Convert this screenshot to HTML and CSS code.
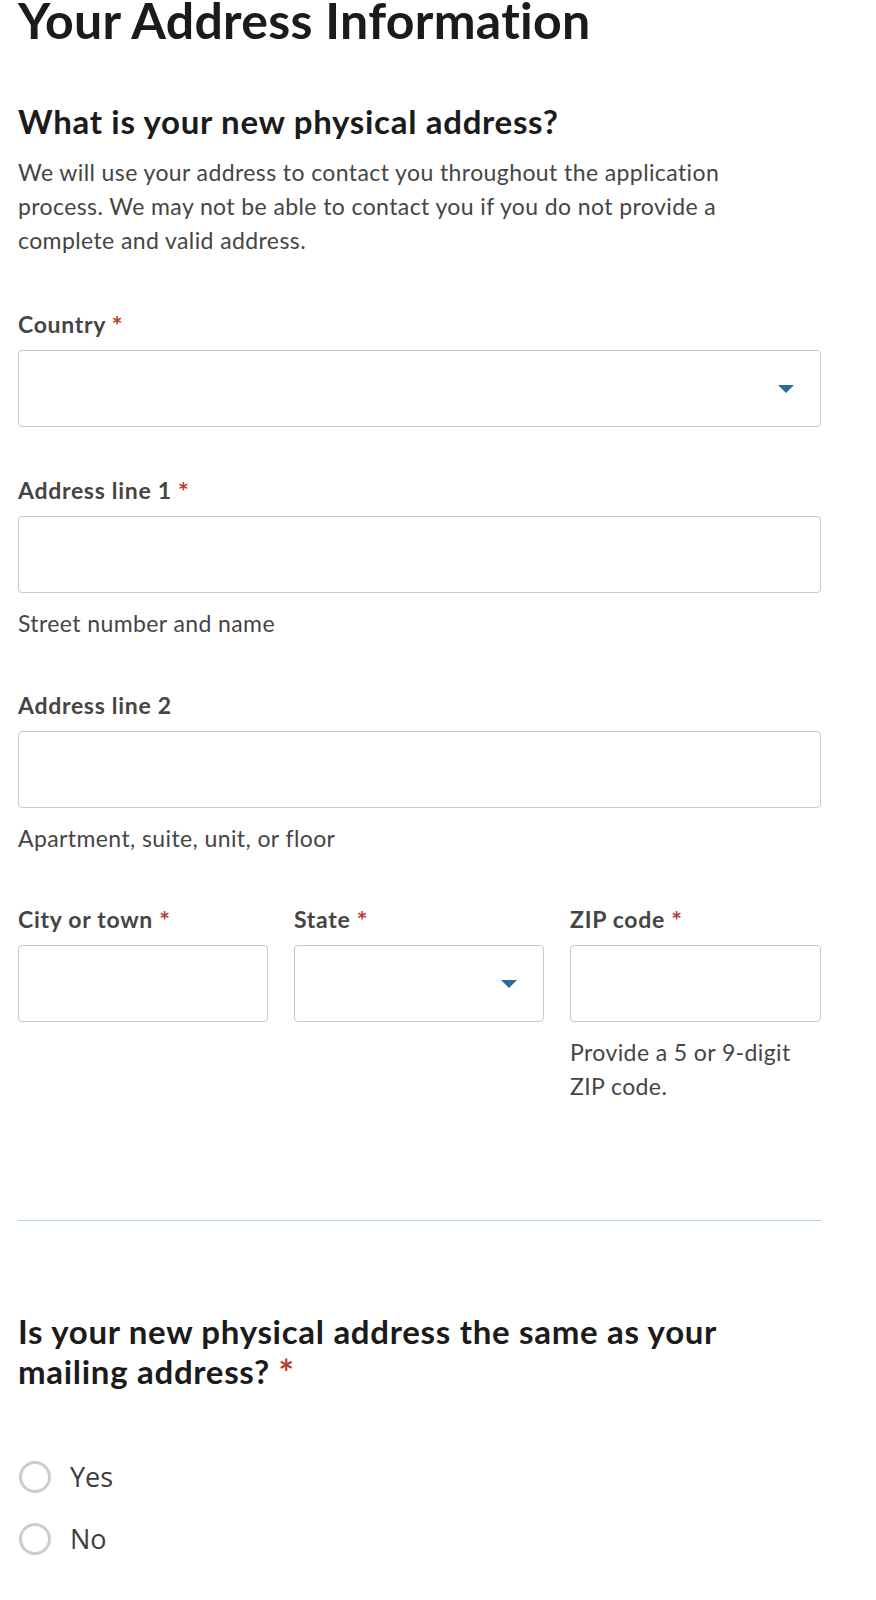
FILE: index.html
```html
<!DOCTYPE html>
<html lang="en">
<head>
<meta charset="utf-8">
<title>Your Address Information</title>
<link rel="stylesheet" href="styles.css">
</head>
<body>
<main class="page">
  <h1 class="page-title">Your Address Information</h1>

  <section class="section">
    <h2 class="section-title">What is your new physical address?</h2>
    <p class="intro">We will use your address to contact you throughout the application process. We may not be able to contact you if you do not provide a complete and valid address.</p>

    <div class="field field-first">
      <label class="field-label" for="country">Country <span class="req">*</span></label>
      <div class="select">
        <select id="country" class="control"></select>
        <span class="caret"></span>
      </div>
    </div>

    <div class="field">
      <label class="field-label" for="line1">Address line 1 <span class="req">*</span></label>
      <input id="line1" class="control" type="text">
      <div class="hint">Street number and name</div>
    </div>

    <div class="field field-after-hint">
      <label class="field-label" for="line2">Address line 2</label>
      <input id="line2" class="control" type="text">
      <div class="hint">Apartment, suite, unit, or floor</div>
    </div>

    <div class="field-row">
      <div class="field-col">
        <label class="field-label" for="city">City or town <span class="req">*</span></label>
        <input id="city" class="control" type="text">
      </div>
      <div class="field-col">
        <label class="field-label" for="state">State <span class="req">*</span></label>
        <div class="select">
          <select id="state" class="control"></select>
          <span class="caret"></span>
        </div>
      </div>
      <div class="field-col">
        <label class="field-label" for="zip">ZIP code <span class="req">*</span></label>
        <input id="zip" class="control" type="text">
        <div class="hint">Provide a 5 or 9-digit ZIP code.</div>
      </div>
    </div>
  </section>

  <hr class="divider">

  <fieldset class="question">
    <legend class="question-title">Is your new physical address the same as your mailing address? <span class="req">*</span></legend>
    <label class="radio">
      <input type="radio" name="same" value="yes">
      <span class="radio-mark"></span>
      <span class="radio-text">Yes</span>
    </label>
    <label class="radio">
      <input type="radio" name="same" value="no">
      <span class="radio-mark"></span>
      <span class="radio-text">No</span>
    </label>
  </fieldset>
</main>
</body>
</html>
```

FILE: styles.css
```css
* {
  box-sizing: border-box;
}

html, body {
  margin: 0;
  padding: 0;
  background: #ffffff;
}

body {
  font-family: "Lato", "Liberation Sans", sans-serif;
  color: #454545;
}

.page {
  width: 803px;
  margin-left: 18px;
}

.page-title {
  margin: 0;
  font-size: 50px;
  line-height: 40px;
  font-weight: 700;
  letter-spacing: 0.3px;
  color: #1b1b1b;
}

.section-title {
  margin: 61px 0 0;
  font-size: 33px;
  line-height: 40px;
  font-weight: 700;
  letter-spacing: 0.7px;
  color: #1b1b1b;
}

.intro {
  margin: 14px 0 0;
  max-width: 745px;
  font-size: 23px;
  line-height: 34px;
  letter-spacing: 0.4px;
  color: #454545;
}

.field {
  margin-top: 46px;
}

.field-first {
  margin-top: 50px;
}

.field-after-hint {
  margin-top: 48px;
}

.field-label {
  display: block;
  font-size: 23px;
  line-height: 34px;
  font-weight: 700;
  letter-spacing: 0.7px;
  color: #454545;
  margin-bottom: 9px;
}

/* required marker; a tight line-height keeps it from growing the line box */
.req {
  color: #c0392b;
  font-weight: 700;
  font-size: 1.1em;
  line-height: 1;
  letter-spacing: 0;
  vertical-align: -2px;
}

.control {
  display: block;
  width: 100%;
  height: 77px;
  margin: 0;
  padding: 0 16px;
  border: 1px solid #c8c8c8;
  border-radius: 4px;
  background: #ffffff;
  font: inherit;
  appearance: none;
  -webkit-appearance: none;
}

.select {
  position: relative;
}

/* blue down-pointing triangle inside selects */
.caret {
  position: absolute;
  right: 27px;
  top: 35px;
  width: 0;
  height: 0;
  border-left: 8px solid transparent;
  border-right: 8px solid transparent;
  border-top: 8px solid #2c6a9e;
  pointer-events: none;
}

.hint {
  margin-top: 13px;
  font-size: 23px;
  line-height: 34px;
  letter-spacing: 0.4px;
  color: #454545;
}

.field-row {
  display: grid;
  grid-template-columns: 250px 250px 251px;
  column-gap: 26px;
  margin-top: 47px;
  align-items: start;
}

.field-col .hint {
  margin-top: 13px;
}

.divider {
  margin: 117px 0 0;
  border: 0;
  border-top: 1px solid #aad4f6;
  height: 0;
}

.question {
  margin: 90px 0 0;
  padding: 0;
  border: 0;
  min-width: 0;
}

.question-title {
  padding: 0;
  font-size: 33px;
  line-height: 40px;
  font-weight: 700;
  letter-spacing: 0.7px;
  color: #1b1b1b;
}

.radio {
  display: flex;
  align-items: center;
  height: 40px;
  margin-top: 22px;
  cursor: pointer;
}

.radio:first-of-type {
  margin-top: 66px;
}

.radio input {
  position: absolute;
  opacity: 0;
  width: 0;
  height: 0;
}

.radio-mark {
  flex: none;
  width: 32px;
  height: 32px;
  margin-left: 1px;
  border: 3px solid #cccccc;
  border-radius: 50%;
  background: #ffffff;
}

.radio-text {
  margin-left: 19px;
  font-family: "Open Sans", "Noto Sans", sans-serif;
  font-size: 27px;
  line-height: 40px;
  color: #3d3d3d;
}
```
